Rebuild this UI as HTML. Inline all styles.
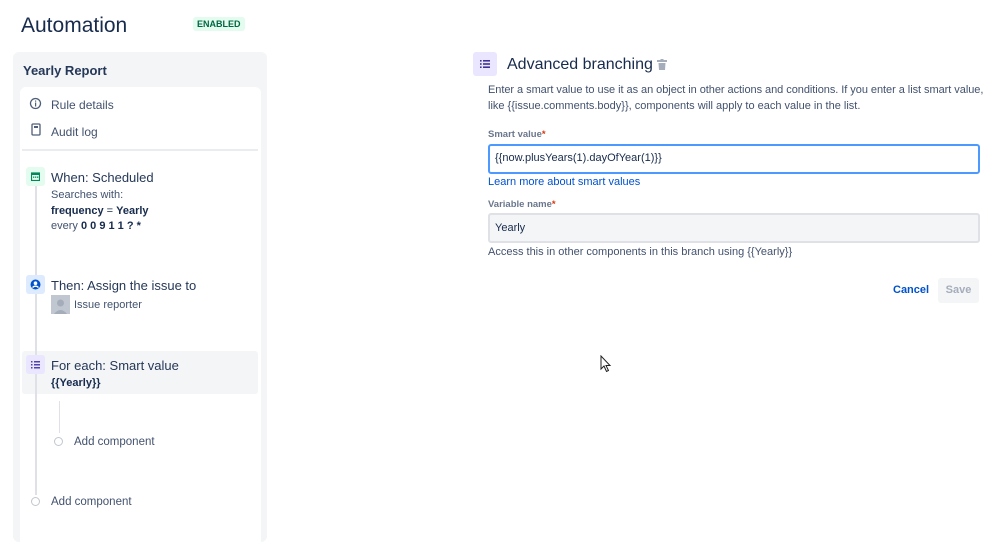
<!DOCTYPE html>
<html><head><meta charset="utf-8"><style>
*{box-sizing:border-box;margin:0;padding:0}
body{width:999px;height:527px;overflow:hidden;background:#fff;font-family:"Liberation Sans",sans-serif;color:#172b4d;position:relative}
.a{position:absolute;white-space:nowrap}
.s{font-size:12px}
</style></head><body>
<div class="a" style="left:21px;top:14px;font-size:21px;color:#172b4d">Automation</div>
<div class="a" style="left:193px;top:17px;font-size:9px;font-weight:bold;color:#006644;background:#e3fcef;padding:2px 4px;border-radius:3px">ENABLED</div>

<div class="a" style="left:13px;top:52px;width:254px;height:490px;background:#f4f5f7;border-radius:6px"></div>
<div class="a" style="left:23px;top:63px;font-size:13px;font-weight:bold;color:#253858">Yearly Report</div>
<div class="a" style="left:20px;top:87px;width:241px;height:460px;background:#fff;border-radius:6px"></div>
<svg class="a" style="left:29px;top:97px" width="13" height="13"><circle cx="6.5" cy="6.5" r="5" fill="none" stroke="#505f79" stroke-width="1.3"/><rect x="6" y="5.5" width="1.2" height="4" fill="#505f79"/><rect x="6" y="3.5" width="1.2" height="1.2" fill="#505f79"/></svg>
<div class="a s" style="left:51px;top:98px;color:#42526e">Rule details</div>
<svg class="a" style="left:31px;top:123px" width="10" height="13"><rect x="1" y="1" width="8" height="11" rx="1" fill="none" stroke="#505f79" stroke-width="1.3"/><rect x="3" y="3" width="4" height="2" fill="#505f79"/></svg>
<div class="a s" style="left:51px;top:125px;color:#42526e">Audit log</div>
<div class="a" style="left:22px;top:149px;width:236px;height:2px;background:#ebecf0"></div>

<div class="a" style="left:35px;top:185px;width:2px;height:310px;background:#dfe1e6"></div>
<div class="a" style="left:26px;top:167px;width:19px;height:19px;background:#e3fcef;border-radius:3px"></div>
<svg class="a" style="left:31px;top:172px" width="9" height="9"><rect x="0.5" y="1" width="8" height="7.5" fill="none" stroke="#00875a" stroke-width="1.2"/><rect x="0.5" y="1" width="8" height="2" fill="#00875a"/><rect x="2" y="4.5" width="1.3" height="1.3" fill="#00875a"/><rect x="4" y="4.5" width="1.3" height="1.3" fill="#00875a"/><rect x="6" y="4.5" width="1.3" height="1.3" fill="#00875a"/></svg>
<div class="a" style="left:51px;top:170px;font-size:13px;color:#253858">When: Scheduled</div>
<div class="a" style="left:51px;top:189px;font-size:11px;color:#42526e">Searches with:</div>
<div class="a" style="left:51px;top:205px;font-size:11px;color:#172b4d"><b>frequency</b> = <b>Yearly</b></div>
<div class="a" style="left:51px;top:220px;font-size:11px;color:#42526e">every <b style="color:#172b4d">0 0 9 1 1 ? *</b></div>

<div class="a" style="left:26px;top:275px;width:19px;height:19px;background:#deebff;border-radius:3px"></div>
<svg class="a" style="left:30px;top:279px" width="11" height="11"><circle cx="5.5" cy="5.5" r="5" fill="#0052cc"/><circle cx="5.5" cy="4.2" r="1.8" fill="#fff"/><path d="M2.5 8.5 Q5.5 5.8 8.5 8.5" stroke="#fff" stroke-width="1.4" fill="none"/></svg>
<div class="a" style="left:51px;top:278px;font-size:13px;color:#253858">Then: Assign the issue to</div>
<div class="a" style="left:51px;top:295px;width:19px;height:19px;background:#c1c7d0"><svg width="19" height="19"><circle cx="9.5" cy="8" r="3.5" fill="#a5adba"/><path d="M3 19 Q9.5 11 16 19Z" fill="#a5adba"/></svg></div>
<div class="a" style="left:74px;top:299px;font-size:11px;color:#42526e">Issue reporter</div>

<div class="a" style="left:22px;top:351px;width:236px;height:43px;background:#f4f5f7;border-radius:3px"></div>
<div class="a" style="left:35px;top:351px;width:2px;height:43px;background:#dfe1e6"></div>
<div class="a" style="left:26px;top:355px;width:19px;height:19px;background:#eae6ff;border-radius:3px"></div>
<svg class="a" style="left:31px;top:360px" width="9" height="9" fill="#5243aa"><rect x="0" y="1" width="1.5" height="1.5"/><rect x="3" y="1" width="6" height="1.5"/><rect x="0" y="4" width="1.5" height="1.5"/><rect x="3" y="4" width="6" height="1.5"/><rect x="0" y="7" width="1.5" height="1.5"/><rect x="3" y="7" width="6" height="1.5"/></svg>
<div class="a" style="left:51px;top:358px;font-size:13px;color:#253858">For each: Smart value</div>
<div class="a" style="left:51px;top:377px;font-size:11px;font-weight:bold;color:#172b4d">{{Yearly}}</div>
<div class="a" style="left:59px;top:401px;width:1px;height:32px;background:#dfe1e6"></div>
<div class="a" style="left:54px;top:437px;width:9px;height:9px;border:1px solid #c1c7d0;border-radius:50%;background:#fff"></div>
<div class="a" style="left:74px;top:436px;font-size:11.5px;color:#42526e">Add component</div>
<div class="a" style="left:31px;top:497px;width:9px;height:9px;border:1px solid #c1c7d0;border-radius:50%;background:#fff"></div>
<div class="a" style="left:51px;top:496px;font-size:11.5px;color:#42526e">Add component</div>

<div class="a" style="left:473px;top:52px;width:24px;height:24px;background:#eae6ff;border-radius:3px"></div>
<svg class="a" style="left:480px;top:59px" width="10" height="10" fill="#403294"><rect x="0" y="1" width="1.6" height="1.6"/><rect x="3" y="1" width="7" height="1.6"/><rect x="0" y="4.2" width="1.6" height="1.6"/><rect x="3" y="4.2" width="7" height="1.6"/><rect x="0" y="7.4" width="1.6" height="1.6"/><rect x="3" y="7.4" width="7" height="1.6"/></svg>
<div class="a" style="left:507px;top:56px;font-size:16px;color:#172b4d">Advanced branching</div>
<svg class="a" style="left:657px;top:59px" width="10" height="12" fill="#a5adba"><rect x="0" y="1" width="10" height="2"/><rect x="3.5" y="0" width="3" height="1.5"/><path d="M1.5 4 H8.5 L8 11 H2Z"/></svg>
<div class="a" style="left:488px;top:84px;color:#42526e;font-size:11px;letter-spacing:-0.05px">Enter a smart value to use it as an object in other actions and conditions. If you enter a list smart value,</div>
<div class="a" style="left:488px;top:100px;color:#42526e;font-size:11px">like {{issue.comments.body}}, components will apply to each value in the list.</div>
<div class="a" style="left:488px;top:129px;font-size:9.5px;font-weight:bold;color:#6b778c">Smart value<span style="color:#de350b">*</span></div>
<div class="a" style="left:488px;top:144px;width:492px;height:30px;border:2px solid #4c9aff;border-radius:3px;background:#fff"></div>
<div class="a" style="left:495px;top:152px;font-size:11px">{{now.plusYears(1).dayOfYear(1)}}</div>
<div class="a" style="left:488px;top:176px;font-size:11px;color:#0052cc">Learn more about smart values</div>
<div class="a" style="left:488px;top:199px;font-size:9.5px;font-weight:bold;color:#6b778c">Variable name<span style="color:#de350b">*</span></div>
<div class="a" style="left:488px;top:213px;width:492px;height:30px;border:2px solid #dfe1e6;border-radius:3px;background:#f4f5f7"></div>
<div class="a" style="left:495px;top:222px;font-size:11px">Yearly</div>
<div class="a" style="left:488px;top:246px;font-size:11px;color:#42526e">Access this in other components in this branch using {{Yearly}}</div>
<div class="a" style="left:893px;top:284px;font-size:11px;color:#0052cc;font-weight:bold">Cancel</div>
<div class="a" style="left:938px;top:278px;width:41px;height:25px;background:#f4f5f7;border-radius:3px;color:#a5adba;font-size:11px;font-weight:bold;text-align:center;line-height:25px">Save</div>
<svg class="a" style="left:600px;top:355px" width="12" height="18"><path d="M1 1 V14 L4 11 L6.5 16.5 L8.5 15.5 L6 10.5 H10Z" fill="#fff" stroke="#222" stroke-width="1"/></svg>
</body></html>
